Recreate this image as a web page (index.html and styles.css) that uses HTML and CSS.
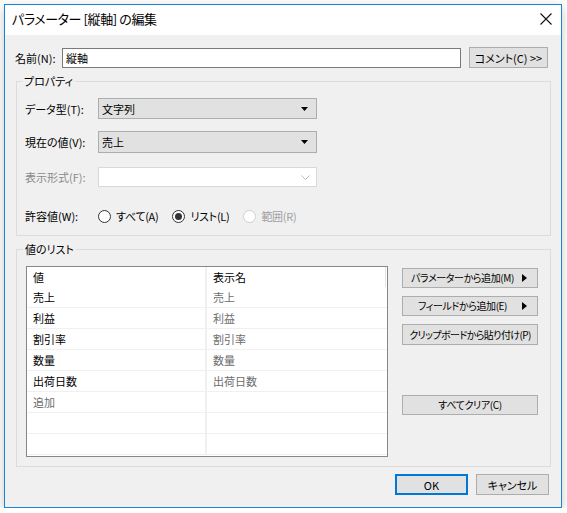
FILE: index.html
```html
<!DOCTYPE html>
<html lang="ja">
<head>
  <meta charset="UTF-8" />
  <title>パラメーターの編集</title>
  <link rel="stylesheet" href="styles.css">
</head>
<body>

<div class="window">
  <div class="titlebar">
    <span class="title">パラメーター [縦軸] の編集</span>
    <svg class="close" width="12" height="12" viewBox="0 0 12 12">
      <path d="M0.5 0.5 L11.5 11.5 M11.5 0.5 L0.5 11.5" stroke="#111" stroke-width="1.1" fill="none"/>
    </svg>
  </div>

  <div class="content">
    <div class="name-row">
      <label class="name-label">名前(N):</label>
      <input class="name-input" type="text" value="縦軸" />
      <button class="btn comment-btn">コメント(C) &gt;&gt;</button>
    </div>

    <fieldset class="group props">
      <legend>プロパティ</legend>

      <div class="field first">
        <span class="field-label">データ型(T):</span>
        <div class="combo">
          <span>文字列</span>
          <svg width="7" height="4" viewBox="0 0 7 4"><path d="M0 0 H7 L3.5 4 Z" fill="#000"/></svg>
        </div>
      </div>

      <div class="field second">
        <span class="field-label">現在の値(V):</span>
        <div class="combo">
          <span>売上</span>
          <svg width="7" height="4" viewBox="0 0 7 4"><path d="M0 0 H7 L3.5 4 Z" fill="#000"/></svg>
        </div>
      </div>

      <div class="field third">
        <span class="field-label disabled">表示形式(F):</span>
        <div class="combo combo-off">
          <span></span>
          <svg width="9" height="5" viewBox="0 0 9 5"><path d="M0.5 0.5 L4.5 4.5 L8.5 0.5" stroke="#bcbcbc" fill="none"/></svg>
        </div>
      </div>

      <div class="field radios">
        <span class="field-label">許容値(W):</span>
        <div class="radio-set">
          <span class="radio"><i class="dot"></i>すべて(A)</span>
          <span class="radio checked"><i class="dot"></i>リスト(L)</span>
          <span class="radio off"><i class="dot"></i>範囲(R)</span>
        </div>
      </div>
    </fieldset>

    <fieldset class="group values">
      <legend>値のリスト</legend>
      <div class="list-body">
        <div class="grid">
          <div class="row head"><span>値</span><span>表示名</span></div>
          <div class="row"><span>売上</span><span>売上</span></div>
          <div class="row"><span>利益</span><span>利益</span></div>
          <div class="row"><span>割引率</span><span>割引率</span></div>
          <div class="row"><span>数量</span><span>数量</span></div>
          <div class="row"><span>出荷日数</span><span>出荷日数</span></div>
          <div class="row add"><span>追加</span><span></span></div>
          <div class="row"><span></span><span></span></div>
          <div class="row"><span></span><span></span></div>
        </div>

        <div class="side-buttons">
          <button class="btn side menu">
            <span class="btn-text">パラメーターから追加(M)</span>
            <svg width="5" height="8" viewBox="0 0 5 8"><path d="M0 0 L5 4 L0 8 Z" fill="#000"/></svg>
          </button>
          <button class="btn side menu">
            <span class="btn-text">フィールドから追加(E)</span>
            <svg width="5" height="8" viewBox="0 0 5 8"><path d="M0 0 L5 4 L0 8 Z" fill="#000"/></svg>
          </button>
          <button class="btn side paste">クリップボードから貼り付け(P)</button>
          <button class="btn side clear">すべてクリア(C)</button>
        </div>
      </div>
    </fieldset>

    <div class="dialog-buttons">
      <button class="btn ok">OK</button>
      <button class="btn">キャンセル</button>
    </div>
  </div>
</div>

</body>
</html>
```

FILE: styles.css
```css
* {
  box-sizing: border-box;
}
body {
  margin: 0;
  background: #fff;
  font-family: "Noto Sans CJK JP", "Noto Sans", sans-serif;
  font-size: 11px;
  font-feature-settings: "palt";
  color: #000;
  white-space: nowrap;
}
.window {
  margin: 4px 0 0 4px;
  width: 558px;
  height: 504px;
  border: 1px solid #1883d7;
  background: #f0f0f0;
  box-shadow: 0 3px 10px rgba(0,0,0,0.22);
}
.titlebar {
  height: 30px;
  background: #fff;
  display: flex;
  align-items: center;
  justify-content: space-between;
  padding: 0 9px 2px 7px;
}
.title {
  font-size: 13px;
  letter-spacing: -0.4px;
  line-height: 18px;
}
.content {
  padding-top: 12px;
}

/* name */
.name-row {
  display: flex;
  align-items: center;
  height: 21px;
  padding-left: 10px;
}
.name-label {
  width: 47px;
}
.name-input {
  width: 399px;
  height: 20px;
  border: 1px solid #7a7a7a;
  background: #fff;
  font: inherit;
  padding: 0 3px;
  margin: 0;
}
.btn {
  font: inherit;
  font-size: 11px;
  color: #000;
  background: #e1e1e1;
  border: 1px solid #adadad;
  padding: 0;
  margin: 0;
  border-radius: 0;
  height: 21px;
  line-height: 18px;
  white-space: nowrap;
}
.comment-btn {
  width: 79px;
  margin-left: 8px;
}

/* group boxes */
.group {
  margin: 6px 10px 0 11px;
  border: 1px solid #dcdcdc;
  padding: 10px 8px 9px 8px;
}
.group legend {
  padding: 0 2px;
  margin-left: -3px;
  line-height: 14px;
}
.field {
  display: flex;
  align-items: center;
  height: 21px;
}
.field.second {
  margin-top: 12px;
  height: 22px;
}
.field.third {
  margin-top: 14px;
  height: 20px;
}
.field.radios {
  margin-top: 19px;
  height: 20px;
}
.field-label {
  width: 73px;
}
.field-label.disabled {
  color: #8a8a8a;
}
.combo {
  width: 219px;
  height: 100%;
  background: #e1e1e1;
  border: 1px solid #adadad;
  display: flex;
  align-items: center;
  justify-content: space-between;
  padding: 0 8px 0 3px;
}
.combo-off {
  background: #fff;
  border-color: #d9d9d9;
  padding-right: 6px;
}

/* radio buttons */
.radio-set {
  display: flex;
  align-items: center;
  letter-spacing: -0.3px;
}
.radio {
  display: flex;
  align-items: center;
  gap: 5px;
  margin-right: 14px;
}
.radio .dot {
  width: 13px;
  height: 13px;
  border: 1px solid #333;
  border-radius: 50%;
  background: #fff;
  display: flex;
  align-items: center;
  justify-content: center;
}
.radio.checked .dot::after {
  content: "";
  width: 7px;
  height: 7px;
  border-radius: 50%;
  background: #333;
}
.radio.off {
  color: #a0a0a0;
}
.radio.off .dot {
  border-color: #cfcfcf;
}

/* value list */
.values {
  padding-left: 9px;
}
.list-body {
  display: flex;
  gap: 14px;
}
.grid {
  width: 362px;
  height: 191px;
  border: 1px solid #828790;
  background: #fff;
}
.row {
  display: grid;
  grid-template-columns: 180px 179px;
  height: 21px;
  border-bottom: 1px solid #f0f0f0;
}
.row.head {
  height: 20px;
  border-bottom: none;
}
.row span {
  padding-left: 6px;
  line-height: 20px;
}
.row span:first-child {
  border-right: 2px solid #f0f0f0;
}
.row span:last-child {
  color: #6d6d6d;
}
.row.head span:last-child {
  color: #000;
  border-right: 1px solid #e5e5e5;
}
.row.add span:first-child {
  color: #6d6d6d;
}

.side-buttons {
  display: flex;
  flex-direction: column;
  width: 136px;
  padding-top: 2px;
}
.side {
  width: 136px;
  height: 20px;
  font-size: 10px;
  letter-spacing: -0.4px;
}
.menu {
  display: flex;
  align-items: center;
  padding-right: 10px;
}
.menu .btn-text {
  flex: 1;
  text-align: center;
}
.side + .side {
  margin-top: 8px;
}
.paste {
  height: 21px;
  letter-spacing: -0.6px;
}
.side.clear {
  margin-top: 50px;
}

/* OK / cancel */
.dialog-buttons {
  display: flex;
  justify-content: flex-end;
  gap: 8px;
  margin: 7px 12px 0 0;
}
.dialog-buttons .btn {
  width: 73px;
}
.btn.ok {
  border: 2px solid #0078d7;
}
```
